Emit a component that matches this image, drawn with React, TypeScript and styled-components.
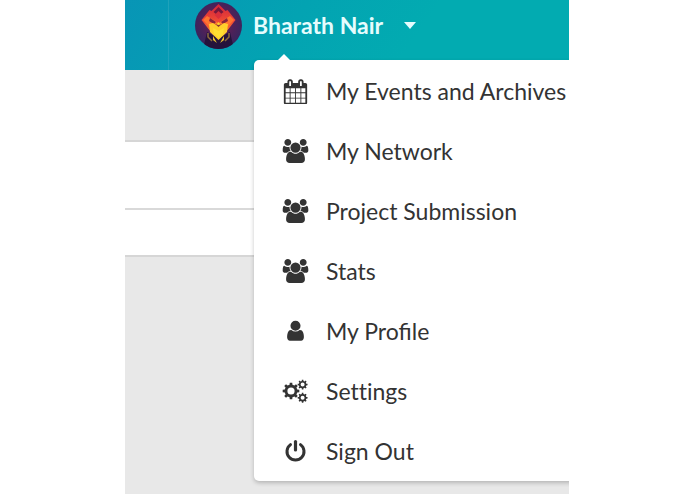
import React from "react";
import styled, { createGlobalStyle } from "styled-components";

const GlobalStyle = createGlobalStyle`
  *, *::before, *::after { box-sizing: border-box; }
  body {
    margin: 0;
    background: #fff;
    font-family: Lato, "Liberation Sans", sans-serif;
  }
`;

const Page = styled.div`
  display: flex;
  flex-direction: column;
  min-height: 100vh;
  margin: 0 126px 0 125px;
  position: relative;
  overflow: hidden;
  background: #e8e8e8;
`;

const Header = styled.header`
  display: flex;
  height: 70px;
  background: linear-gradient(125deg, #0895b6 0, #03a3b2 150px, #02abb1 260px);
`;

const HeaderCell = styled.div`
  width: 44px;
  border-right: 1px solid #1fa2ba;
`;

const UserButton = styled.button`
  display: flex;
  align-items: center;
  height: 50px;
  padding: 0 0 0 26px;
  border: 0;
  background: none;
  color: #e6fcfd;
  font: 700 23px/28px Lato, "Liberation Sans", sans-serif;
  white-space: nowrap;
  cursor: pointer;
`;

const Avatar = styled.svg`
  width: 47px;
  height: 47px;
  margin-right: 11px;
`;

const Caret = styled.svg`
  width: 12px;
  height: 7px;
  margin-left: 21px;
`;

const Panel = styled.section`
  margin-top: 70px;
  border-top: 2px solid #d6d6d6;
  border-bottom: 2px solid #d6d6d6;
  background: #fff;
`;

const PanelRow = styled.div<{ $tall?: boolean }>`
  height: ${(p) => (p.$tall ? 66 : 47)}px;

  & + & {
    border-top: 2px solid #d9d9d9;
  }
`;

const Menu = styled.nav`
  position: absolute;
  top: 60px;
  left: 129px;
  right: -8px;
  padding: 1px 0 0;
  border-radius: 5px;
  background: #fff;
  box-shadow: 0 2px 4px rgba(0, 0, 0, 0.22);

  &::before {
    content: "";
    position: absolute;
    top: -6px;
    left: 24px;
    border: solid transparent;
    border-width: 0 6px 6px;
    border-bottom-color: #fff;
  }
`;

const MenuList = styled.ul`
  margin: 0;
  padding: 0;
  list-style: none;
`;

const MenuLink = styled.a<{ $plainLetters?: boolean }>`
  display: flex;
  align-items: center;
  gap: 17px;
  height: 60px;
  padding-left: 28px;
  color: #333;
  font-size: 23px;
  line-height: 28px;
  font-variant-ligatures: ${(p) => (p.$plainLetters ? "none" : "normal")};
  text-decoration: none;
  white-space: nowrap;
`;

const Icon = styled.svg`
  flex: none;
  width: 27px;
  height: 25px;
  fill: #333;
`;

function gear(cx: number, cy: number, outer: number, inner: number, hole: number, teeth: number) {
  const points: string[] = [];
  const step = (Math.PI * 2) / teeth;
  for (let i = 0; i < teeth; i++) {
    const a = i * step;
    const corners = [
      [inner, -0.29],
      [outer, -0.19],
      [outer, 0.19],
      [inner, 0.29],
    ];
    for (const [r, t] of corners) {
      points.push(`${(cx + r * Math.cos(a + t * step)).toFixed(2)} ${(cy + r * Math.sin(a + t * step)).toFixed(2)}`);
    }
  }
  return (
    `M${points.join("L")}Z` +
    `M${cx - hole} ${cy}a${hole} ${hole} 0 1 0 ${hole * 2} 0a${hole} ${hole} 0 1 0 ${-hole * 2} 0Z`
  );
}

const CalendarIcon = () => (
  <Icon viewBox="-132 -26 1928 1786" aria-hidden="true">
    <path d="M128 1664h288v-288h-288v288zm352 0h320v-288h-320v288zm-352-352h288v-320h-288v320zm352 0h320v-320h-320v320zm-352-384h288v-288h-288v288zm736 736h320v-288h-320v288zm-384-736h320v-288h-320v288zm768 736h288v-288h-288v288zm-384-352h320v-320h-320v320zm-352-864v-288q0-13-9.500-22.500t-22.500-9.500h-64q-13 0-22.500 9.500t-9.500 22.500v288q0 13 9.500 22.500t22.500 9.500h64q13 0 22.500-9.500t9.500-22.500zm736 864h288v-320h-288v320zm-384-384h320v-288h-320v288zm384 0h288v-288h-288v288zm32-480v-288q0-13-9.500-22.500t-22.500-9.500h-64q-13 0-22.500 9.500t-9.500 22.500v288q0 13 9.500 22.500t22.500 9.500h64q13 0 22.500-9.500t9.500-22.500zm384-64v1280q0 52-38 90t-90 38h-1408q-52 0-90-38t-38-90v-1280q0-52 38-90t90-38h128v-96q0-66 47-113t113-47h64q66 0 113 47t47 113v96h384v-96q0-66 47-113t113-47h64q66 0 113 47t47 113v96h128q52 0 90 38t38 90z" />
  </Icon>
);

const UsersIcon = () => (
  <Icon viewBox="-50 0 2020 1870" aria-hidden="true">
    <path d="M593 896q-162 5-265 128h-134q-82 0-138-40.500t-56-118.500q0-353 124-353 6 0 43.500 21t97.500 42.500 119 21.500q67 0 133-23-5 37-5 66 0 139 81 256zm1071 637q0 120-73 189.500t-194 69.500h-874q-121 0-194-69.500t-73-189.500q0-53 3.500-103.500t14-109 26.500-108.500 43-97.500 62-81 85.500-53.500 111.500-20q10 0 43 21.500t73 48 107 48 135 21.500 135-21.500 107-48 73-48 43-21.500q61 0 111.500 20t85.500 53.500 62 81 43 97.500 26.500 108.500 14 109 3.500 103.500zm-1024-1277q0 106-75 181t-181 75-181-75-75-181 75-181 181-75 181 75 75 181zm704 384q0 159-112.500 271.500t-271.500 112.500-271.500-112.500-112.500-271.500 112.500-271.500 271.500-112.500 271.500 112.500 112.500 271.500zm576 225q0 78-56 118.500t-138 40.500h-134q-103-123-265-128 81-117 81-256 0-29-5-66 66 23 133 23 59 0 119-21.500t97.500-42.500 43.500-21q124 0 124 353zm-128-609q0 106-75 181t-181 75-181-75-75-181 75-181 181-75 181 75 75 181z" />
  </Icon>
);

const UserIcon = () => (
  <Icon viewBox="-390 0 2060 1908" aria-hidden="true">
    <path d="M1280 1399q0 109-62.500 187t-150.500 78h-854q-88 0-150.500-78t-62.500-187q0-85 8.500-160.500t31.500-152 58.500-131 94-89 134.500-34.500q131 128 313 128t313-128q76 0 134.500 34.500t94 89 58.500 131 31.500 152 8.500 160.500zm-256-887q0 159-112.500 271.500t-271.500 112.500-271.500-112.500-112.500-271.500 112.500-271.500 271.500-112.500 271.500 112.500 112.500 271.500z" />
  </Icon>
);

const CogsIcon = () => (
  <Icon viewBox="0 0 27 25" aria-hidden="true">
    <path fillRule="evenodd" d={gear(9, 12, 8.4, 6.4, 3.6, 8)} />
    <path fillRule="evenodd" d={gear(20.6, 5.6, 5, 3.8, 2, 8)} />
    <path fillRule="evenodd" d={gear(20.6, 18.8, 5, 3.8, 2, 8)} />
  </Icon>
);

const PowerIcon = () => (
  <Icon viewBox="0 0 27 25" aria-hidden="true">
    <g fill="none" stroke="#333" strokeLinecap="round">
      <path strokeWidth="3" d="M8.500 5.600a8.500 8.500 0 1 0 10 0" />
      <path strokeWidth="3.200" d="M13.500 2.600v8.400" />
    </g>
  </Icon>
);

const items = [
  { label: "My Events and Archives", Glyph: CalendarIcon },
  { label: "My Network", Glyph: UsersIcon },
  { label: "Project Submission", Glyph: UsersIcon },
  { label: "Stats", Glyph: UsersIcon },
  { label: "My Profile", Glyph: UserIcon },
  { label: "Settings", Glyph: CogsIcon, plainLetters: true },
  { label: "Sign Out", Glyph: PowerIcon },
];

const BirdAvatar = () => (
  <Avatar viewBox="0 0 47 47" aria-hidden="true">
    <defs>
      <radialGradient id="disc" cx="0.5" cy="0.45" r="0.55">
        <stop offset="0" stopColor="#7a2350" />
        <stop offset="0.6" stopColor="#4f2158" />
        <stop offset="1" stopColor="#35265f" />
      </radialGradient>
      <linearGradient id="wing" x1="0" y1="0" x2="0" y2="1">
        <stop offset="0" stopColor="#d0253c" />
        <stop offset="0.5" stopColor="#f04a35" />
        <stop offset="1" stopColor="#fb9a26" />
      </linearGradient>
      <clipPath id="round"><circle cx="23.500" cy="23.500" r="23.500" /></clipPath>
    </defs>
    <g clipPath="url(#round)">
      <path fill="url(#disc)" d="M0 0h47v47H0z" />
      <path fill="#25133c" d="M12 30l11.500 6L35 30l4 17H8z" />
      <path fill="url(#wing)" d="M23.500 2l7 7 2-1 8 10-7 9-10 10-10-10-7-9 8-10 2 1z" />
      <path fill="#76173c" d="M23.500 5l5 5-5 4-5-4z" />
      <path fill="#d92f3c" d="M23.500 9l4 4-4 4-4-4z" />
      <path fill="#ff7430" d="M8 18l4-4 11.500 7L35 14l4 4-7 7H15z" />
      <path fill="#8b243c" d="M15 16l6 4-2 2-5-3zm17 0l-6 4 2 2 5-3z" />
      <path fill="#ffcf2b" d="M14 22l4-1 3 2 2.500-3 2.500 3 3-2 4 1-1 8-8.500 8-8.500-8z" />
      <path fill="#8f3a30" d="M20 22l3.500 3 3.500-3-3.500 1z" />
      <path fill="#ffdf32" d="M18 26l5.500 3 5.500-3-1 6-4.500 4-4.500-4z" />
      <path fill="none" stroke="#8e6b3c" strokeWidth="1.500" d="M13 31v4l4 4m17-8v4l-4 4" />
      <path fill="#eec52e" d="M18 34l4 7-4-3zm11 0l-4 7 4-3z" />
    </g>
  </Avatar>
);

export default function App() {
  return (
    <>
      <GlobalStyle />
      <Page>
        <Header>
          <HeaderCell />
          <UserButton type="button" aria-haspopup="true" aria-expanded="true">
            <BirdAvatar />
            Bharath Nair
            <Caret viewBox="0 0 12 7" aria-hidden="true">
              <path fill="#e6fcfd" d="M0 0h12L6 7z" />
            </Caret>
          </UserButton>
        </Header>
        <Panel>
          <PanelRow $tall />
          <PanelRow />
        </Panel>
        <Menu aria-label="Account">
          <MenuList>
            {items.map(({ label, Glyph, plainLetters }) => (
              <li key={label}>
                <MenuLink href="#" $plainLetters={plainLetters}>
                  <Glyph />
                  {label}
                </MenuLink>
              </li>
            ))}
          </MenuList>
        </Menu>
      </Page>
    </>
  );
}
